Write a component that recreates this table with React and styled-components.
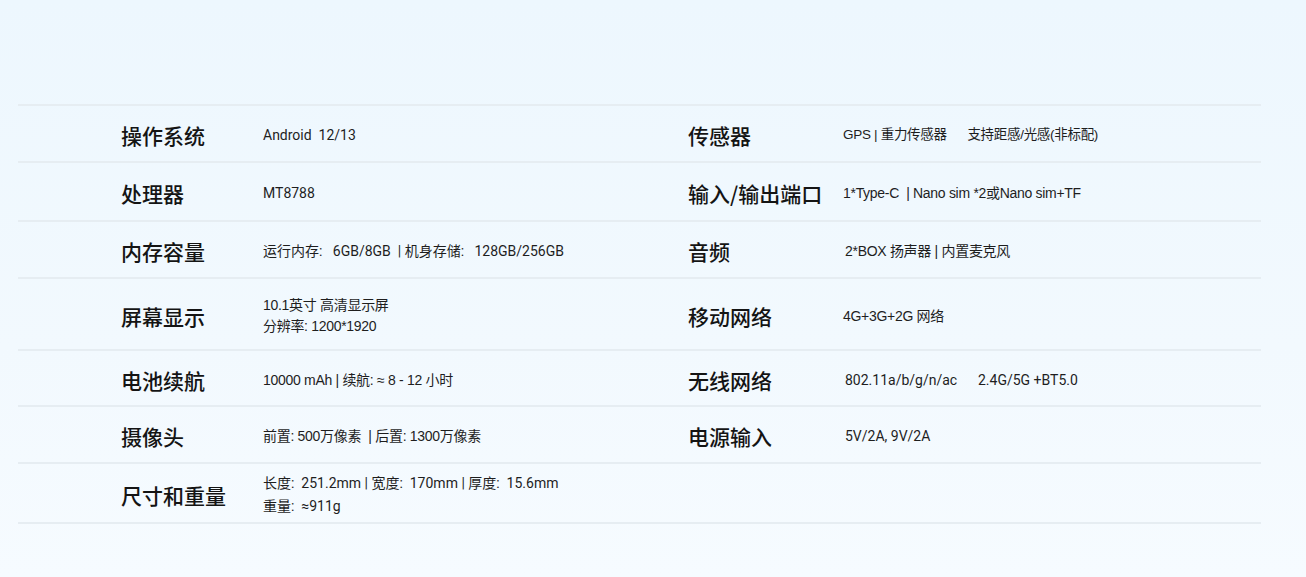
import React from "react";
import styled, { createGlobalStyle } from "styled-components";

const specs = [
  {
    h: 57,
    left: { label: "操作系统", lines: ["Android  12/13"] },
    right: { label: "传感器", lines: ["GPS | 重力传感器\u00a0\u00a0\u00a0\u00a0\u00a0\u00a0支持距感/光感(非标配)"], tight: true, size: 13.5 },
  },
  {
    h: 59,
    left: { label: "处理器", lines: ["MT8788"] },
    right: { label: "输入/输出端口", lines: ["1*Type-C  | Nano sim *2或Nano sim+TF"], tight: true },
  },
  {
    h: 57,
    left: { label: "内存容量", lines: ["运行内存:\u00a0\u00a0 6GB/8GB\u00a0 | 机身存储:\u00a0\u00a0 128GB/256GB"] },
    right: { label: "音频", lines: ["2*BOX 扬声器 | 内置麦克风"], tight: true, shift: 2 },
  },
  {
    h: 72,
    left: { label: "屏幕显示", lines: ["10.1英寸 高清显示屏", "分辨率: 1200*1920"], tight: true, lh: 21 },
    right: { label: "移动网络", lines: ["4G+3G+2G 网络"], tight: true },
  },
  {
    h: 56,
    left: { label: "电池续航", lines: ["10000 mAh | 续航: ≈ 8 - 12 小时"], tight: true },
    right: { label: "无线网络", lines: ["802.11a/b/g/n/ac\u00a0\u00a0\u00a0\u00a0\u00a0\u00a02.4G/5G +BT5.0"], shift: 2 },
  },
  {
    h: 57,
    left: { label: "摄像头", lines: ["前置: 500万像素  | 后置: 1300万像素"], tight: true },
    right: { label: "电源输入", lines: ["5V/2A, 9V/2A"], shift: 2 },
  },
  {
    h: 60,
    left: {
      label: "尺寸和重量",
      lines: ["长度:  251.2mm | 宽度:  170mm | 厚度:  15.6mm", "重量:  ≈911g"],
      lh: 23,
    },
    right: null,
  },
];

const GlobalStyle = createGlobalStyle`
  html, body {
    margin: 0;
    padding: 0;
  }
  body {
    background: linear-gradient(180deg, #edf7fe 0%, #f2f9fe 60%, #f6fbff 100%);
    min-height: 577px;
    font-family: Roboto, "Noto Sans CJK SC", sans-serif;
  }
`;

const Page = styled.div`
  padding: 104px 45px 0 18px;
  height: 577px;
  box-sizing: border-box;
`;

const Table = styled.div`
  width: 1243px;
  border-bottom: 2px solid #e6edf2;
`;

const Row = styled.div`
  display: grid;
  grid-template-columns: 103px 142px 425px 155px 1fr;
  align-items: center;
  height: ${p => p.$h}px;
  box-sizing: border-box;
  padding-top: 3px;
  border-top: 2px solid #e6edf2;
`;

const Label = styled.div`
  font-family: "Noto Sans CJK SC", sans-serif;
  font-size: 21px;
  font-weight: 500;
  color: #141414;
  white-space: nowrap;
`;

const Value = styled.div`
  font-family: ${p =>
    p.$tight
      ? '"Liberation Sans", "Noto Sans CJK SC", sans-serif'
      : 'Roboto, "Noto Sans CJK SC", sans-serif'};
  font-size: ${p => p.$size || 14}px;
  color: #1e1e1e;
  line-height: ${p => p.$lh || 18}px;
  letter-spacing: ${p => (p.$tight ? "-0.3px" : "0")};
  padding-left: ${p => p.$shift || 0}px;
  white-space: pre;
`;

const Cell = ({ item }) => {
  if (!item) return [<div key="l" />, <div key="v" />];
  return [
    <Label key="l">{item.label}</Label>,
    <Value
      key="v"
      $tight={item.tight}
      $lh={item.lh}
      $shift={item.shift}
      $size={item.size}
    >
      {item.lines.map((t, i) => (
        <div key={i}>{t}</div>
      ))}
    </Value>,
  ];
};

const App = () => {
  return (
    <>
      <GlobalStyle />
      <Page>
        <Table>
          {specs.map((s, i) => (
            <Row key={i} $h={s.h}>
              <div />
              <Cell item={s.left} />
              <Cell item={s.right} />
            </Row>
          ))}
        </Table>
      </Page>
    </>
  );
};

export default App;
